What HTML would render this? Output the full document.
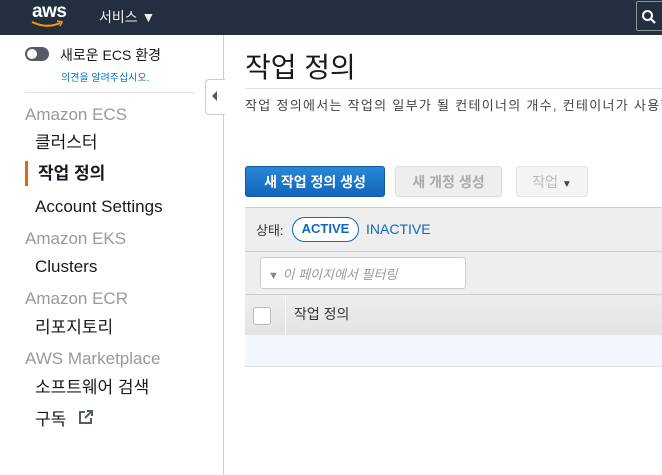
<!DOCTYPE html>
<html><head><meta charset="utf-8"><style>
*{margin:0;padding:0;box-sizing:border-box}
body{width:662px;height:475px;overflow:hidden;background:#fff;font-family:"Liberation Sans","Noto Sans CJK KR",sans-serif;position:relative;color:#16191f}
.hdr{position:absolute;left:0;top:0;width:662px;height:35px;background:#232f3e}
.abs{position:absolute;white-space:nowrap}
.side{position:absolute;left:0;top:35px;width:224px;height:440px;border-right:1px solid #ccc}
.sec{color:#999;font-size:17px}
.it{color:#16191f;font-size:17px}
.btn{position:absolute;top:166px;height:31px;border-radius:3px;font-size:14px;font-weight:bold;text-align:center;line-height:30px}
</style></head><body>
<div class="hdr"></div>
<div class="abs" style="left:32px;top:1px;color:#fff;font-size:19px;font-weight:bold;letter-spacing:-0.5px">aws</div>
<svg class="abs" style="left:31px;top:20px" width="34" height="8"><path d="M1 2 Q16 9 29 3" stroke="#f90" stroke-width="2" fill="none"/><path d="M26 1 L31 2 L29 6" stroke="#f90" stroke-width="1.6" fill="none"/></svg>
<div class="abs" style="left:99px;top:7px;color:#eee;font-size:14px">서비스 ▼</div>
<div class="abs" style="left:636px;top:1px;width:30px;height:30px;border:1px solid #879596;border-radius:2px"></div>
<svg class="abs" style="left:641px;top:9px" width="16" height="16"><circle cx="6.5" cy="6.5" r="4.5" stroke="#fff" stroke-width="2" fill="none"/><path d="M10 10 L14 14" stroke="#fff" stroke-width="2.2"/></svg>

<div class="side"></div>
<div class="abs" style="left:25px;top:47px;width:24px;height:14px;border-radius:7px;background:#545b64"></div>
<div class="abs" style="left:27px;top:49px;width:10px;height:10px;border-radius:50%;background:#fff"></div>
<div class="abs" style="left:60px;top:45px;font-size:14px;color:#16191f">새로운 ECS 환경</div>
<div class="abs" style="left:61px;top:69px;font-size:10px;color:#0073bb">의견을 알려주십시오.</div>
<div class="abs" style="left:25px;top:92px;width:170px;height:1px;background:#e0e0e0"></div>
<div class="abs" style="left:205px;top:79px;width:20px;height:36px;border:1px solid #ccc;border-right:none;border-radius:4px 0 0 4px;background:#fff"></div>
<div class="abs" style="left:212px;top:91px;width:0;height:0;border-top:5px solid transparent;border-bottom:5px solid transparent;border-right:5px solid #545b64"></div>
<div class="abs sec" style="left:25px;top:105px">Amazon ECS</div>
<div class="abs it" style="left:35px;top:128px">클러스터</div>
<div class="abs" style="left:25px;top:161px;width:3px;height:25px;background:#dd6b10"></div>
<div class="abs it" style="left:38px;top:159px;font-weight:bold">작업 정의</div>
<div class="abs it" style="left:35px;top:197px">Account Settings</div>
<div class="abs sec" style="left:25px;top:229px">Amazon EKS</div>
<div class="abs it" style="left:35px;top:257px">Clusters</div>
<div class="abs sec" style="left:25px;top:289px">Amazon ECR</div>
<div class="abs it" style="left:35px;top:313px">리포지토리</div>
<div class="abs sec" style="left:25px;top:349px">AWS Marketplace</div>
<div class="abs it" style="left:35px;top:373px">소프트웨어 검색</div>
<div class="abs it" style="left:35px;top:405px">구독</div>
<svg class="abs" style="left:77px;top:409px" width="18" height="16"><path d="M8 3 H3 V14 H14 V9" stroke="#545b64" stroke-width="2" fill="none"/><path d="M8 9 L15 2 M10 2 H15 V7" stroke="#545b64" stroke-width="2" fill="none"/></svg>

<div class="abs" style="left:245px;top:46px;font-size:28px;color:#16191f">작업 정의</div>
<div class="abs" style="left:245px;top:88px;width:417px;height:1px;background:#e0e0e0"></div>
<div class="abs" style="left:245px;top:95px;font-size:13px;color:#444;letter-spacing:1.3px">작업 정의에서는 작업의 일부가 될 컨테이너의 개수, 컨테이너가 사용할</div>

<div class="btn" style="left:245px;width:140px;background:linear-gradient(#2a87d6,#1166bb);border:1px solid #15589f;color:#fff">새 작업 정의 생성</div>
<div class="btn" style="left:395px;width:107px;background:#eee;border:1px solid #ddd;color:#aaa">새 개정 생성</div>
<div class="btn" style="left:516px;width:72px;background:#f4f4f4;border:1px solid #e6e6e6;color:#bbb;font-weight:normal">작업 <span style="color:#444;font-size:10px">▼</span></div>

<div class="abs" style="left:245px;top:207px;width:417px;height:128px;background:#eee;border-top:1px solid #ccc"></div>
<div class="abs" style="left:245px;top:251px;width:417px;height:1px;background:#ccc"></div>
<div class="abs" style="left:256px;top:220px;font-size:13px;color:#333">상태:</div>
<div class="abs" style="left:292px;top:217px;width:67px;height:25px;border:1.5px solid #1166bb;border-radius:13px;background:#fff;color:#1166bb;font-size:13px;font-weight:bold;text-align:center;line-height:22px">ACTIVE</div>
<div class="abs" style="left:366px;top:221px;font-size:14px;color:#1166bb">INACTIVE</div>
<div class="abs" style="left:260px;top:257px;width:206px;height:32px;border:1px solid #ccc;border-radius:3px;background:#fff"></div>
<div class="abs" style="left:268px;top:264px;font-size:13px;color:#999;font-style:italic"><span style="font-size:11px;color:#888">▼</span> 이 페이지에서 필터링</div>
<div class="abs" style="left:245px;top:294px;width:417px;height:41px;background:linear-gradient(#eee,#e3e3e3);border-top:1px solid #ccc"></div>
<div class="abs" style="left:285px;top:295px;width:1px;height:40px;background:#fff"></div>
<div class="abs" style="left:253px;top:307px;width:18px;height:18px;border:1px solid #bbb;border-radius:3px;background:#fff"></div>
<div class="abs" style="left:294px;top:304px;font-size:14px;color:#333">작업 정의</div>
<div class="abs" style="left:245px;top:335px;width:417px;height:32px;background:#f1f7fd;border-bottom:1px solid #ddd"></div>
</body></html>
